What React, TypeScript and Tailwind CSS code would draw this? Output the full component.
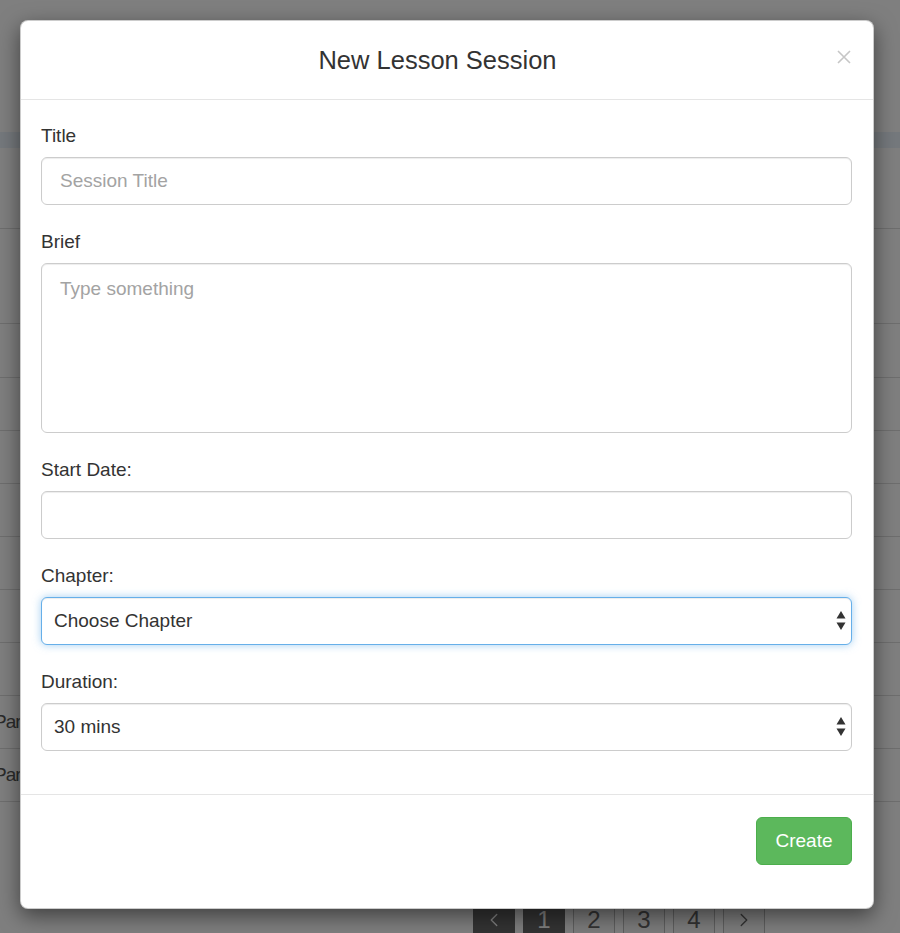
import React from 'react';
import { ChevronLeft, ChevronRight } from 'lucide-react';

const font = { fontFamily: '"Liberation Sans", Arial, sans-serif' };

const Arrows: React.FC = () => (
  <svg width="10" height="19" viewBox="0 0 10 19" className="pointer-events-none absolute right-[6px] top-[14px]">
    <path d="M5 0 L9.5 7.5 L0.5 7.5 Z" fill="#333" />
    <path d="M5 19 L9.5 11.5 L0.5 11.5 Z" fill="#333" />
  </svg>
);

const Label: React.FC<{ children: React.ReactNode }> = ({ children }) => (
  <label className="block h-[29px] leading-[29px] mb-[7px] text-[19px] text-[#333]">{children}</label>
);

const inputCls =
  'block w-full h-[48px] rounded-[6px] border border-[#ccc] bg-white pl-[18px] pr-3 text-[19px] text-[#333] placeholder:text-[#a3a3a3] shadow-[inset_0_1px_1px_rgba(0,0,0,0.075)] outline-none';

const App: React.FC = () => {
  const rows = [54, 53, 53, 53, 53, 53, 53, 53, 53];

  return (
    <div className="relative w-[900px] h-[933px] overflow-hidden bg-white" style={font}>
      {/* page behind the modal */}
      <div className="h-[132px]" />
      <div className="h-[16px] bg-[#eaf3fa]" />
      <div className="h-[81px] border-b border-[#ddd]" />
      <div className="h-[95px] border-b border-[#ddd]" />
      {rows.map((h, i) => (
        <div
          key={i}
          className="border-b border-[#ddd] flex items-center text-[19px] text-[#555]"
          style={{ height: h }}
        >
          {i >= 7 && <span className="ml-[-6px] tracking-[-1px]">Part</span>}
        </div>
      ))}
      <div className="mt-[94px] ml-[473px] flex gap-[8px] text-[24px]">
        <div className="w-[42px] h-[48px] bg-[#666] flex items-center justify-center text-white">
          <ChevronLeft size={22} strokeWidth={1.5} />
        </div>
        <div className="w-[42px] h-[48px] bg-[#666] flex items-center justify-center text-white">1</div>
        {['2', '3', '4'].map((n) => (
          <div key={n} className="w-[42px] h-[48px] bg-[#f8f8f8] border border-[#bcbcbc] flex items-center justify-center text-[#666]">
            {n}
          </div>
        ))}
        <div className="w-[42px] h-[48px] bg-[#f8f8f8] border border-[#bcbcbc] flex items-center justify-center text-[#666]">
          <ChevronRight size={22} strokeWidth={1.5} />
        </div>
      </div>

      {/* backdrop + modal */}
      <div className="absolute inset-0 bg-black/50 pt-[20px] pl-[20px]">
        <div className="w-[854px] bg-white border border-black/20 rounded-[8px] shadow-[0_7px_21px_rgba(0,0,0,0.5)]">
          <div className="relative h-[79px] border-b border-[#e5e5e5] flex items-center justify-center pr-[19px]">
            <h4 className="text-[25.5px] text-[#333] leading-[36px]">New Lesson Session</h4>
            <button className="absolute right-[22px] top-[29px]">
              <svg width="14" height="14" viewBox="0 0 14 14">
                <path d="M1 1 L13 13 M13 1 L1 13" stroke="#c6c6c6" strokeWidth="1.6" />
              </svg>
            </button>
          </div>

          <div className="pt-[21px] pb-[21px] pl-[20px] pr-[21px]">
            <div className="mb-[22px]">
              <Label>Title</Label>
              <input className={inputCls} placeholder="Session Title" />
            </div>
            <div className="mb-[22px]">
              <Label>Brief</Label>
              <textarea
                className={`${inputCls} h-[170px] pt-[10px] resize-none leading-[29px]`}
                placeholder="Type something"
              />
            </div>
            <div className="mb-[22px]">
              <Label>Start Date:</Label>
              <input className={inputCls} />
            </div>
            <div className="mb-[22px]">
              <Label>Chapter:</Label>
              <div className="relative">
                <select className="block w-full h-[48px] appearance-none rounded-[6px] border border-[#66afe9] bg-white pl-[12px] text-[19px] text-[#333] outline-none shadow-[inset_0_1px_1px_rgba(0,0,0,0.075),0_0_8px_rgba(102,175,233,0.6)]">
                  <option>Choose Chapter</option>
                </select>
                <Arrows />
              </div>
            </div>
            <div className="mb-[22px]">
              <Label>Duration:</Label>
              <div className="relative">
                <select className="block w-full h-[48px] appearance-none rounded-[6px] border border-[#ccc] bg-white pl-[12px] text-[19px] text-[#333] outline-none shadow-[inset_0_1px_1px_rgba(0,0,0,0.075)]">
                  <option>30 mins</option>
                </select>
                <Arrows />
              </div>
            </div>
          </div>

          <div className="border-t border-[#e5e5e5] pt-[22px] pb-[43px] pr-[21px] flex justify-end">
            <button className="h-[48px] w-[96px] rounded-[6px] bg-[#5cb85c] border border-[#4cae4c] text-white text-[19px]">
              Create
            </button>
          </div>
        </div>
      </div>
    </div>
  );
};

export default App;
